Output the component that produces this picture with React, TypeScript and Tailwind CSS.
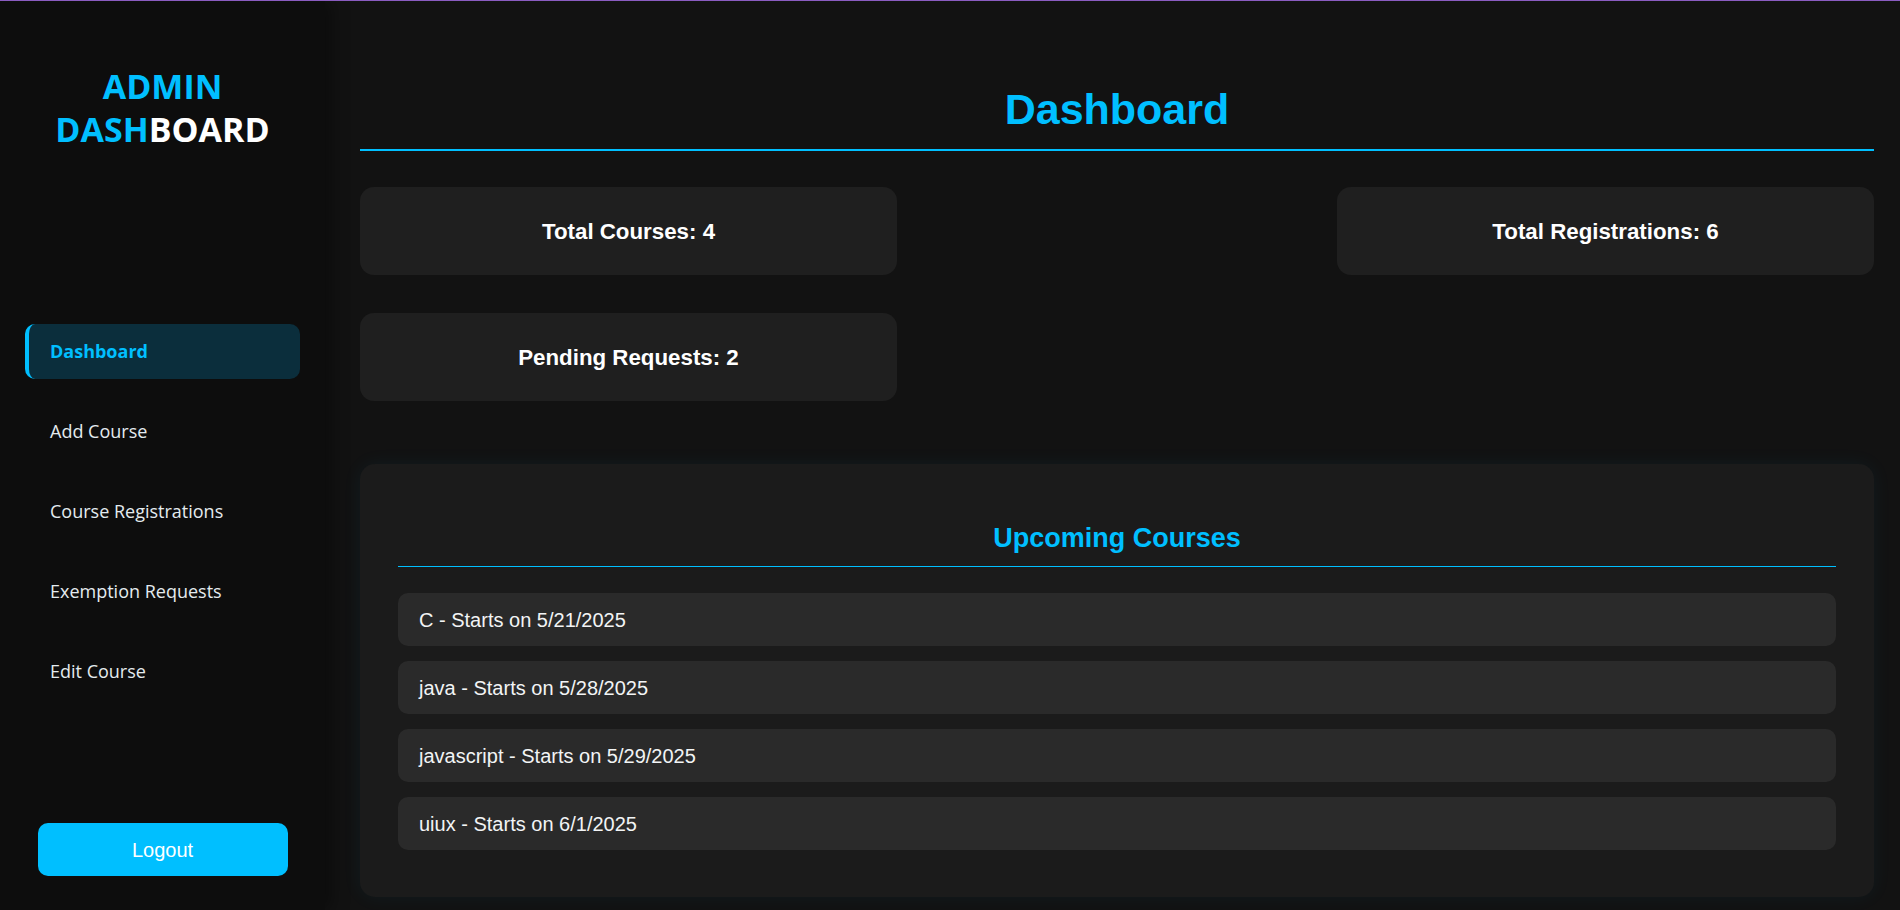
const navItems = ["Dashboard", "Add Course", "Course Registrations", "Exemption Requests", "Edit Course"]

const upcoming = [
  { name: "C", date: "5/21/2025" },
  { name: "java", date: "5/28/2025" },
  { name: "javascript", date: "5/29/2025" },
  { name: "uiux", date: "6/1/2025" },
]

const stats = [
  { label: "Total Courses", value: 4 },
  { label: "Total Registrations", value: 6 },
  { label: "Pending Requests", value: 2 },
]

function Sidebar() {
  return (
    <aside className="relative z-10 flex w-[325px] shrink-0 flex-col bg-[#0d0d0d] pt-[64px] pb-[34px] shadow-[4px_0_18px_rgba(0,0,0,0.45)] font-['Open_Sans',sans-serif]">
      <h1 className="text-center text-[34px] font-bold leading-[43px] text-[#00bfff]">
        ADMIN
        <br />
        DASH<span className="text-white">BOARD</span>
      </h1>

      <nav className="mt-[173px] flex flex-col gap-[25px] px-[25px]">
        {navItems.map((item, i) =>
          i === 0 ? (
            <a
              key={item}
              href="#"
              className="flex h-[55px] items-center rounded-[10px] border-l-4 border-[#00bfff] bg-[#0b2e3c] pl-[21px] text-[18px] font-bold text-[#00bfff]"
            >
              {item}
            </a>
          ) : (
            <a key={item} href="#" className="flex h-[55px] items-center pl-[25px] text-[18px] text-[#e4ebef]">
              {item}
            </a>
          )
        )}
      </nav>

      <button className="mx-auto mt-auto h-[53px] w-[250px] rounded-[10px] bg-[#00bfff] text-[20px] text-white font-['Liberation_Sans',Arial,sans-serif]">
        Logout
      </button>
    </aside>
  )
}

export default function App() {
  return (
    <div className="flex h-screen overflow-hidden border-t border-[#8a5cc0] bg-[#121212] font-['Liberation_Sans',Arial,sans-serif]">
      <Sidebar />

      <main className="flex-1 pt-[84px] pr-[26px] pl-[35px]">
        <h2 className="border-b-2 border-[#00bfff] pb-[15px] text-center text-[43px] font-bold leading-[49px] text-[#00bfff]">
          Dashboard
        </h2>

        {/* stat cards wrap: two per row, third drops under the first */}
        <div className="mt-[36px] flex flex-wrap justify-between gap-y-[38px]">
          {stats.map((s) => (
            <div
              key={s.label}
              className="flex h-[88px] w-[537px] items-center justify-center rounded-[14px] bg-[#1f1f1f] text-[22.3px] font-bold leading-[25px] text-white"
            >
              {s.label}: {s.value}
            </div>
          ))}
        </div>

        <section className="mt-[63px] rounded-[15px] bg-[#1b1b1b] px-[38px] pt-[59px] pb-[47px] shadow-[0_0_20px_rgba(0,191,255,0.06)]">
          <h3 className="border-b border-[#00bfff] pb-[13px] text-center text-[27px] font-bold leading-[30px] text-[#00bfff]">
            Upcoming Courses
          </h3>
          <ul className="mt-[26px] flex flex-col gap-[15px]">
            {upcoming.map((c) => (
              <li
                key={c.name}
                className="flex h-[53px] items-center rounded-[10px] bg-[#2a2a2a] px-[21px] text-[20px] text-[#f2f4f5]"
              >
                {c.name} - Starts on {c.date}
              </li>
            ))}
          </ul>
        </section>
      </main>
    </div>
  )
}
